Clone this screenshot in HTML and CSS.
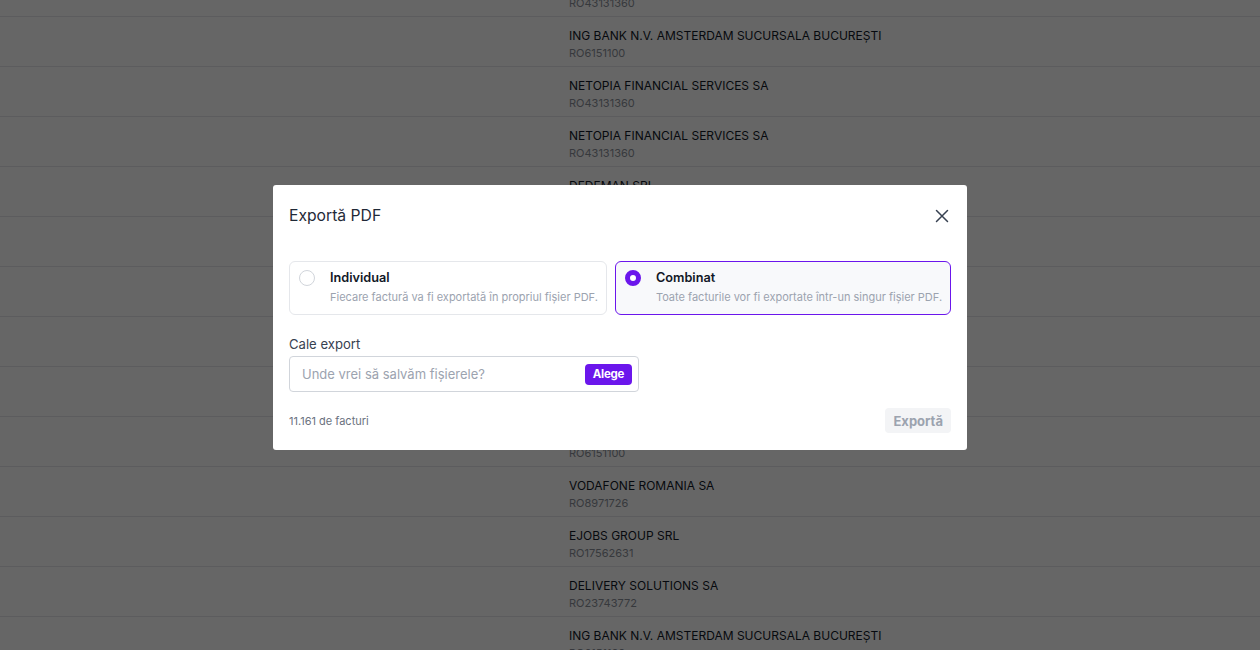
FILE: index.html
```html
<!DOCTYPE html>
<html lang="ro">
<head>
<meta charset="utf-8">
<title>Exportă PDF</title>
<link rel="stylesheet" href="styles.css">
</head>
<body>
<div class="list">
  <div class="row"><div></div><div class="cell"><div class="name">NETOPIA FINANCIAL SERVICES SA</div><div class="sub">RO43131360</div></div></div>
  <div class="row"><div></div><div class="cell"><div class="name">ING BANK N.V. AMSTERDAM SUCURSALA BUCUREȘTI</div><div class="sub">RO6151100</div></div></div>
  <div class="row"><div></div><div class="cell"><div class="name">NETOPIA FINANCIAL SERVICES SA</div><div class="sub">RO43131360</div></div></div>
  <div class="row"><div></div><div class="cell"><div class="name">NETOPIA FINANCIAL SERVICES SA</div><div class="sub">RO43131360</div></div></div>
  <div class="row"><div></div><div class="cell"><div class="name">DEDEMAN SRL</div><div class="sub">RO2816464</div></div></div>
  <div class="row"><div></div><div class="cell"><div class="name">VODAFONE ROMANIA SA</div><div class="sub">RO8971726</div></div></div>
  <div class="row"><div></div><div class="cell"><div class="name">EJOBS GROUP SRL</div><div class="sub">RO17562631</div></div></div>
  <div class="row"><div></div><div class="cell"><div class="name">DELIVERY SOLUTIONS SA</div><div class="sub">RO23743772</div></div></div>
  <div class="row"><div></div><div class="cell"><div class="name">NETOPIA FINANCIAL SERVICES SA</div><div class="sub">RO43131360</div></div></div>
  <div class="row"><div></div><div class="cell"><div class="name">ING BANK N.V. AMSTERDAM SUCURSALA BUCUREȘTI</div><div class="sub">RO6151100</div></div></div>
  <div class="row"><div></div><div class="cell"><div class="name">VODAFONE ROMANIA SA</div><div class="sub">RO8971726</div></div></div>
  <div class="row"><div></div><div class="cell"><div class="name">EJOBS GROUP SRL</div><div class="sub">RO17562631</div></div></div>
  <div class="row"><div></div><div class="cell"><div class="name">DELIVERY SOLUTIONS SA</div><div class="sub">RO23743772</div></div></div>
  <div class="row"><div></div><div class="cell"><div class="name">ING BANK N.V. AMSTERDAM SUCURSALA BUCUREȘTI</div><div class="sub">RO6151100</div></div></div>
</div>

<div class="overlay">
  <div class="modal">
    <div class="modal-head">
      <h2 class="title">Exportă PDF</h2>
      <button class="close" aria-label="Închide">
        <svg width="14" height="14" viewBox="0 0 14 14"><path d="M1.5 1.5 L12.5 12.5 M12.5 1.5 L1.5 12.5" stroke="#374151" stroke-width="1.5" stroke-linecap="round" fill="none"/></svg>
      </button>
    </div>
    <div class="options">
      <div class="option">
        <span class="radio"></span>
        <div class="opt-text">
          <div class="opt-title">Individual</div>
          <div class="opt-desc">Fiecare factură va fi exportată în propriul fișier PDF.</div>
        </div>
      </div>
      <div class="option selected">
        <span class="radio checked"></span>
        <div class="opt-text">
          <div class="opt-title">Combinat</div>
          <div class="opt-desc">Toate facturile vor fi exportate într-un singur fișier PDF.</div>
        </div>
      </div>
    </div>
    <div class="field">
      <label class="label">Cale export</label>
      <div class="input">
        <span class="placeholder">Unde vrei să salvăm fișierele?</span>
        <button class="pick">Alege</button>
      </div>
    </div>
    <div class="footer">
      <span class="count">11.161 de facturi</span>
      <button class="export" disabled>Exportă</button>
    </div>
  </div>
</div>
</body>
</html>
```

FILE: styles.css
```css
* { box-sizing: border-box; }
html, body { margin: 0; padding: 0; }
body {
  font-family: Inter, "Noto Sans", "Liberation Sans", sans-serif;
  background: #ffffff;
  width: 1260px;
  height: 650px;
  overflow: hidden;
}

.list { margin-top: -33px; }
.row {
  display: grid;
  grid-template-columns: 569px 1fr;
  height: 50px;
  border-bottom: 1px solid #e5e7eb;
}
.cell { padding-top: 10px; }
.name {
  font-size: 12px;
  line-height: 18px;
  color: #111827;
}
.sub {
  font-size: 11px;
  line-height: 16px;
  color: #8a8f98;
}

.overlay {
  position: fixed;
  inset: 0;
  background: rgba(0, 0, 0, 0.6);
  padding: 185px 0 0 273px;
}
.modal {
  width: 694px;
  height: 265px;
  background: #ffffff;
  border-radius: 3px;
  padding: 0 16px;
}
.modal-head {
  display: flex;
  align-items: center;
  justify-content: space-between;
  padding-top: 19px;
  margin-bottom: 33px;
}
.title {
  margin: 0;
  font-size: 15.7px;
  font-weight: 400;
  line-height: 24px;
  color: #1f2937;
}
.close {
  border: 0;
  background: none;
  padding: 0;
  margin-right: 2px;
  width: 14px;
  height: 14px;
  display: flex;
}

.options {
  display: flex;
  gap: 8px;
}
.option {
  display: flex;
  align-items: flex-start;
  gap: 15px;
  border: 1px solid #e5e7eb;
  border-radius: 6px;
  padding: 7px 8px 7px 9px;
  flex: none;
}
.option.selected {
  border-color: #6b16ec;
  background: #f8f9fb;
}
.radio {
  width: 16px;
  height: 16px;
  border-radius: 50%;
  border: 1px solid #d1d5db;
  background: #fff;
  margin-top: 1px;
  flex: none;
}
.radio.checked {
  border: 5px solid #6b16ec;
  background: #fff;
}
.opt-title {
  font-size: 12.7px;
  font-weight: 600;
  line-height: 18px;
  color: #111827;
}
.opt-desc {
  font-size: 11px;
  line-height: 20px;
  color: #9ca3af;
  white-space: nowrap;
}

.field { margin-top: 19px; }
.label {
  display: block;
  font-size: 13.1px;
  line-height: 20px;
  color: #374151;
  margin-bottom: 2px;
}
.input {
  width: 350px;
  height: 36px;
  border: 1px solid #d1d5db;
  border-radius: 4px;
  display: flex;
  align-items: center;
  justify-content: space-between;
  padding: 0 6px 0 12px;
}
.placeholder {
  font-size: 13px;
  color: #9ca3af;
}
.pick {
  border: 0;
  background: #6b16ec;
  color: #fff;
  font-family: inherit;
  font-size: 11.5px;
  font-weight: 700;
  height: 21px;
  padding: 0 8px;
  border-radius: 4px;
  letter-spacing: -0.3px;
}

.footer {
  display: flex;
  align-items: center;
  justify-content: space-between;
  margin-top: 16px;
}
.count {
  font-size: 11px;
  color: #6b7280;
}
.export {
  border: 0;
  background: #f3f4f6;
  color: #9ca3af;
  font-family: inherit;
  font-size: 13px;
  font-weight: 700;
  height: 25px;
  padding: 0 8px;
  border-radius: 4px;
}
```
